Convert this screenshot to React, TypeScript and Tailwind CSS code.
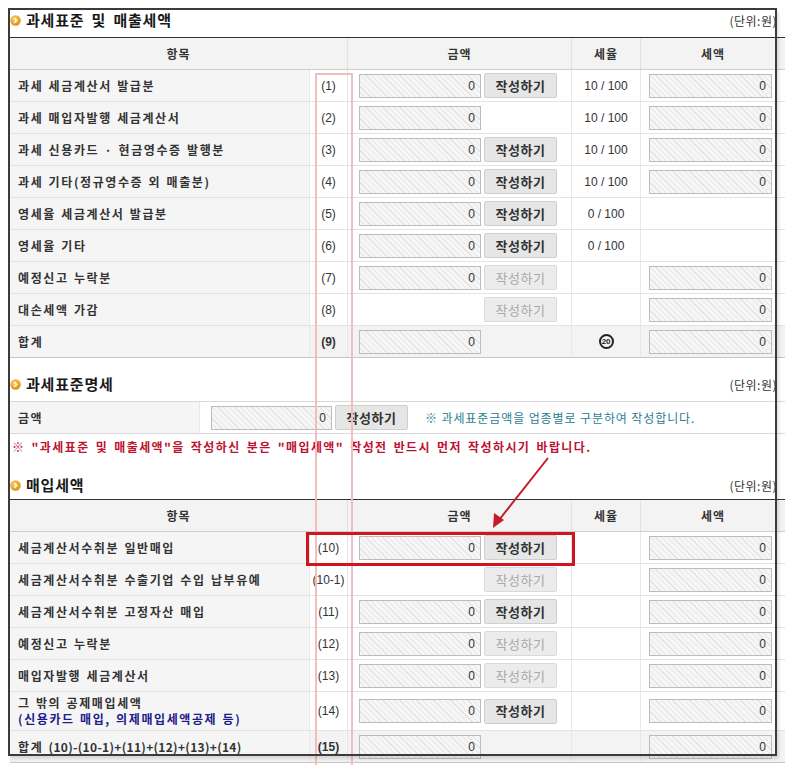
import React from "react";

type Row = {
  label: React.ReactNode;
  no: string;
  amount?: boolean;
  btn?: "on" | "off";
  rate?: string;
  tax?: boolean;
  total?: boolean;
  tall?: boolean;
};

const salesRows: Row[] = [
  { label: "과세 세금계산서 발급분", no: "(1)", amount: true, btn: "on", rate: "10 / 100", tax: true },
  { label: "과세 매입자발행 세금계산서", no: "(2)", amount: true, rate: "10 / 100", tax: true },
  { label: "과세 신용카드 · 현금영수증 발행분", no: "(3)", amount: true, btn: "on", rate: "10 / 100", tax: true },
  { label: "과세 기타(정규영수증 외 매출분)", no: "(4)", amount: true, btn: "on", rate: "10 / 100", tax: true },
  { label: "영세율 세금계산서 발급분", no: "(5)", amount: true, btn: "on", rate: "0 / 100" },
  { label: "영세율 기타", no: "(6)", amount: true, btn: "on", rate: "0 / 100" },
  { label: "예정신고 누락분", no: "(7)", amount: true, btn: "off", tax: true },
  { label: "대손세액 가감", no: "(8)", btn: "off", tax: true },
  { label: "합계", no: "(9)", amount: true, rate: "20", tax: true, total: true },
];

const buyRows: Row[] = [
  { label: "세금계산서수취분 일반매입", no: "(10)", amount: true, btn: "on", tax: true },
  { label: "세금계산서수취분 수출기업 수입 납부유예", no: "(10-1)", btn: "off", tax: true },
  { label: "세금계산서수취분 고정자산 매입", no: "(11)", amount: true, btn: "on", tax: true },
  { label: "예정신고 누락분", no: "(12)", amount: true, btn: "off", tax: true },
  { label: "매입자발행 세금계산서", no: "(13)", amount: true, btn: "off", tax: true },
  {
    label: (
      <>
        <div>그 밖의 공제매입세액</div>
        <div className="text-[#1c1c8a]">(신용카드 매입, 의제매입세액공제 등)</div>
      </>
    ),
    no: "(14)",
    amount: true,
    btn: "on",
    tax: true,
    tall: true,
  },
  {
    label: (
      <div>
        합계 <span className="tracking-[0.3px]">(10)-(10-1)+(11)+(12)+(13)+(14)</span>
      </div>
    ),
    no: "(15)",
    amount: true,
    tax: true,
    total: true,
  },
];

function Bullet() {
  return (
    <svg width="11" height="11" viewBox="0 0 11 11" className="shrink-0">
      <defs>
        <radialGradient id="bg" cx="0.4" cy="0.35" r="0.7">
          <stop offset="0" stopColor="#ffd36b" />
          <stop offset="1" stopColor="#d98c05" />
        </radialGradient>
      </defs>
      <circle cx="5.5" cy="5.5" r="5.2" fill="url(#bg)" />
      <path d="M4.3 3.3 L6.6 5.5 L4.3 7.7" fill="none" stroke="#fff" strokeWidth="1.4" />
    </svg>
  );
}

function Field({ w = "w-[122px]" }: { w?: string }) {
  return (
    <div
      className={`${w} h-[24px] shrink-0 border border-[#bcbcbc] bg-[repeating-linear-gradient(45deg,#f6f6f6_0_3px,#e4e4e4_3px_4px)] pr-[5px] text-right font-['Liberation_Sans',sans-serif] text-[12px] leading-[22px] text-[#333]`}
    >
      0
    </div>
  );
}

function Btn({ off }: { off?: boolean }) {
  return (
    <div
      className={
        off
          ? "flex h-[25px] w-[73px] shrink-0 items-center justify-center rounded-[2px] border border-[#dadada] bg-[#ececec] text-[13px] tracking-[0.5px] text-[#a8a8a8]"
          : "flex h-[25px] w-[73px] shrink-0 items-center justify-center rounded-[2px] border border-[#cfcfcf] bg-[#e6e6e6] text-[13px] font-bold tracking-[0.5px] text-[#333]"
      }
    >
      작성하기
    </div>
  );
}

function SectionTitle({ title, className }: { title: string; className: string }) {
  return (
    <div className={`flex items-center justify-between pr-[8px] ${className}`}>
      <div className="flex items-center gap-[5px]">
        <Bullet />
        <span className="text-[15px] font-bold tracking-[0.8px] text-[#1a1a1a] [word-spacing:3px]">{title}</span>
      </div>
      <span className="text-[12px] tracking-[0.5px] text-[#333]">(단위:원)</span>
    </div>
  );
}

function Header() {
  return (
    <div className="grid grid-cols-[338px_224px_69px_144px] h-[33px] border-t border-t-[#333] border-b border-b-[#cfcfcf] bg-[#f3f3f3] text-[12px] font-bold tracking-[1px] text-[#333]">
      <div className="flex items-center justify-center border-r border-[#e2e2e2]">항목</div>
      <div className="flex items-center justify-center border-r border-[#e2e2e2]">금액</div>
      <div className="flex items-center justify-center border-r border-[#e2e2e2]">세율</div>
      <div className="flex items-center justify-center">세액</div>
    </div>
  );
}

function Circled({ n }: { n: string }) {
  return (
    <span className="flex h-[15px] w-[15px] items-center justify-center rounded-full border-2 border-[#222] font-['Liberation_Sans',sans-serif] text-[8px] font-bold leading-none tracking-[-0.3px] text-[#222]">
      {n}
    </span>
  );
}

function TableRow({ row }: { row: Row }) {
  const height = row.tall ? "h-[39px]" : "h-[32px]";
  const bg = row.total ? "bg-[#f3f3f3] border-b-[#c6c6c6]" : "bg-white border-b-[#e3e3e3]";
  return (
    <div className={`grid grid-cols-[300px_38px_224px_69px_144px] ${height} border-b ${bg} text-[12px] text-[#333]`}>
      <div className={`flex flex-col justify-center border-r border-[#e8e8e8] bg-[#f5f5f5] pl-[8px] font-bold leading-[16px] tracking-[1.6px] [word-spacing:1px] ${row.total ? "bg-[#f0f0f0]" : ""}`}>
        {row.label}
      </div>
      <div className={`flex items-center justify-center border-r border-[#e8e8e8] font-['Liberation_Sans',sans-serif] ${row.total ? "font-bold" : ""}`}>
        {row.no}
      </div>
      <div className="flex items-center gap-[3px] border-r border-[#e8e8e8] pl-[11px]">
        {row.amount ? <Field /> : <div className="w-[122px] shrink-0" />}
        {row.btn ? <Btn off={row.btn === "off"} /> : null}
      </div>
      <div className="flex items-center justify-center border-r border-[#e8e8e8] font-['Liberation_Sans',sans-serif]">
        {row.rate === "20" ? <Circled n="20" /> : row.rate}
      </div>
      <div className="flex items-center pl-[8px]">{row.tax ? <Field w="w-[123px]" /> : null}</div>
    </div>
  );
}

export default function App() {
  return (
    <div className="relative h-[765px] w-[785px] overflow-hidden bg-white pl-[10px] font-['Noto_Sans_CJK_KR',sans-serif]">
      <SectionTitle title="과세표준 및 매출세액" className="h-[37px] pt-[4px]" />
      <Header />
      {salesRows.map((row) => (
        <TableRow row={row} key={row.no} />
      ))}

      <SectionTitle title="과세표준명세" className="h-[43px] pt-[10px]" />
      <div className="flex h-[33px] items-center border-y border-[#d8d8d8] text-[12px]">
        <div className="flex h-full w-[190px] items-center border-r border-[#e8e8e8] bg-[#f5f5f5] pl-[8px] font-bold tracking-[1.5px] text-[#333]">
          금액
        </div>
        <div className="flex items-center gap-[3px] pl-[11px]">
          <Field w="w-[121px]" />
          <Btn />
        </div>
        <div className="pl-[17px] text-[12px] tracking-[0.9px] text-[#2a7d92]">※ 과세표준금액을 업종별로 구분하여 작성합니다.</div>
      </div>
      <div className="flex h-[26px] items-center pl-[2px] text-[12px] font-bold tracking-[1.4px] text-[#bd1230] [word-spacing:2px]">
        ※ "과세표준 및 매출세액"을 작성하신 분은 "매입세액" 작성전 반드시 먼저 작성하시기 바랍니다.
      </div>

      <SectionTitle title="매입세액" className="h-[39px] pt-[12px]" />
      <Header />
      {buyRows.map((row) => (
        <TableRow row={row} key={row.no} />
      ))}

      {/* annotation overlays */}
      <div className="pointer-events-none absolute left-[315px] top-[73px] h-[720px] w-[38px] border-2 border-[#f3bcc1]" />
      <div className="pointer-events-none absolute left-[306px] top-[532px] h-[34px] w-[269px] border-[3px] border-[#cf1620]" />
      <svg className="pointer-events-none absolute left-0 top-0" width="785" height="765">
        <line x1="548" y1="458" x2="499" y2="520" stroke="#c51a2a" strokeWidth="2" />
        <polygon points="493,528 494,513 504,520" fill="#c51a2a" />
      </svg>
      <div className="pointer-events-none absolute left-[8px] top-[8px] h-[748px] w-[769px] border-2 border-[#3b3b3b] shadow-[2px_3px_3px_rgba(0,0,0,0.12)]" />
    </div>
  );
}
